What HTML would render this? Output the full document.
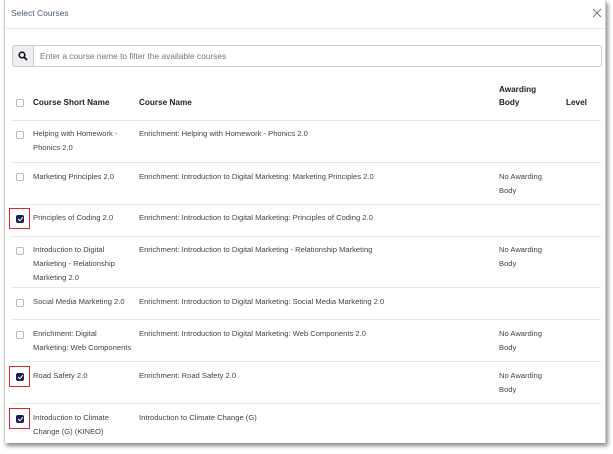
<!DOCTYPE html>
<html><head><style>
*{margin:0;padding:0;box-sizing:border-box}
body{width:613px;height:454px;background:#fff;font-family:"Liberation Sans",sans-serif;position:relative;overflow:hidden;color:#333}
.panel{position:absolute;left:4px;top:0;width:602px;height:443px;background:#fff;border-left:1px solid #ccc;border-right:1px solid #ccc;box-shadow:2px 3px 4px rgba(0,0,0,.45)}
.t{position:absolute;font-size:7.6px;line-height:14px;color:#444;white-space:nowrap}
.h{font-weight:bold;font-size:8.2px;color:#222}
.line{position:absolute;left:11px;width:590px;height:1px;background:#e6e6e6}
.cb{position:absolute;left:16px;width:8px;height:8px;border:1px solid #bbb;border-radius:2px;background:#fff}
.cbc{background:#1d1f4a;border-color:#1d1f4a}
.cbc:after{content:"";position:absolute;left:2px;top:0px;width:2px;height:4px;border:solid #fff;border-width:0 1px 1px 0;transform:rotate(40deg)}
.red{position:absolute;left:9px;width:21px;height:21px;border:1.5px solid #e0242b}
</style></head><body>
<div class="panel"></div>
<div class="t" style="left:11px;top:6px;color:#4c5a78;font-size:8.5px">Select Courses</div>
<svg style="position:absolute;left:592px;top:8px" width="10" height="10"><path d="M1 1L9 9M9 1L1 9" stroke="#777" stroke-width="1"/></svg>
<div class="line" style="top:28px;left:5px;width:600px"></div>
<div style="position:absolute;left:12px;top:45px;width:590px;height:22px;border:1px solid #ccc;border-radius:3px"></div>
<div style="position:absolute;left:12px;top:45px;width:22px;height:22px;background:#eceef2;border:1px solid #ccc;border-radius:3px 0 0 3px"></div>
<svg style="position:absolute;left:18px;top:51px" width="10" height="10"><circle cx="4" cy="4" r="2.8" stroke="#111" stroke-width="1.6" fill="none"/><line x1="6" y1="6" x2="9" y2="9" stroke="#111" stroke-width="1.8"/></svg>
<div class="t" style="left:40px;top:49px;color:#777;font-size:8.4px">Enter a course name to filter the available courses</div>
<div class="cb" style="top:99px"></div>
<div class="t h" style="left:33px;top:96px">Course Short Name</div>
<div class="t h" style="left:139px;top:96px">Course Name</div>
<div class="t h" style="left:499px;top:83px">Awarding</div>
<div class="t h" style="left:499px;top:96px">Body</div>
<div class="t h" style="left:566px;top:96px">Level</div>
<div class="line" style="top:120px"></div>

<div class="cb" style="top:131px"></div>
<div class="t" style="left:33px;top:127px">Helping with Homework -<br>Phonics 2.0</div>
<div class="t" style="left:139px;top:127px">Enrichment: Helping with Homework - Phonics 2.0</div>
<div class="line" style="top:162px"></div>

<div class="cb" style="top:173px"></div>
<div class="t" style="left:33px;top:170px">Marketing Principles 2.0</div>
<div class="t" style="left:139px;top:170px">Enrichment: Introduction to Digital Marketing: Marketing Principles 2.0</div>
<div class="t" style="left:499px;top:170px">No Awarding<br>Body</div>
<div class="line" style="top:204px"></div>

<div class="red" style="top:208px"></div>
<div class="cb cbc" style="top:215px"></div>
<div class="t" style="left:33px;top:211px">Principles of Coding 2.0</div>
<div class="t" style="left:139px;top:211px">Enrichment: Introduction to Digital Marketing: Principles of Coding 2.0</div>
<div class="line" style="top:236px"></div>

<div class="cb" style="top:247px"></div>
<div class="t" style="left:33px;top:243px">Introduction to Digital<br>Marketing - Relationship<br>Marketing 2.0</div>
<div class="t" style="left:139px;top:243px">Enrichment: Introduction to Digital Marketing - Relationship Marketing</div>
<div class="t" style="left:499px;top:243px">No Awarding<br>Body</div>
<div class="line" style="top:287px"></div>

<div class="cb" style="top:299px"></div>
<div class="t" style="left:33px;top:295px">Social Media Marketing 2.0</div>
<div class="t" style="left:139px;top:295px">Enrichment: Introduction to Digital Marketing: Social Media Marketing 2.0</div>
<div class="line" style="top:319px"></div>

<div class="cb" style="top:331px"></div>
<div class="t" style="left:33px;top:327px">Enrichment: Digital<br>Marketing: Web Components</div>
<div class="t" style="left:139px;top:327px">Enrichment: Introduction to Digital Marketing: Web Components 2.0</div>
<div class="t" style="left:499px;top:327px">No Awarding<br>Body</div>
<div class="line" style="top:361px"></div>

<div class="red" style="top:366px"></div>
<div class="cb cbc" style="top:373px"></div>
<div class="t" style="left:33px;top:369px">Road Safety 2.0</div>
<div class="t" style="left:139px;top:369px">Enrichment: Road Safety 2.0</div>
<div class="t" style="left:499px;top:369px">No Awarding<br>Body</div>
<div class="line" style="top:403px"></div>

<div class="red" style="top:408px"></div>
<div class="cb cbc" style="top:415px"></div>
<div class="t" style="left:33px;top:411px">Introduction to Climate<br>Change (G) (KINEO)</div>
<div class="t" style="left:139px;top:411px">Introduction to Climate Change (G)</div>
</body></html>
